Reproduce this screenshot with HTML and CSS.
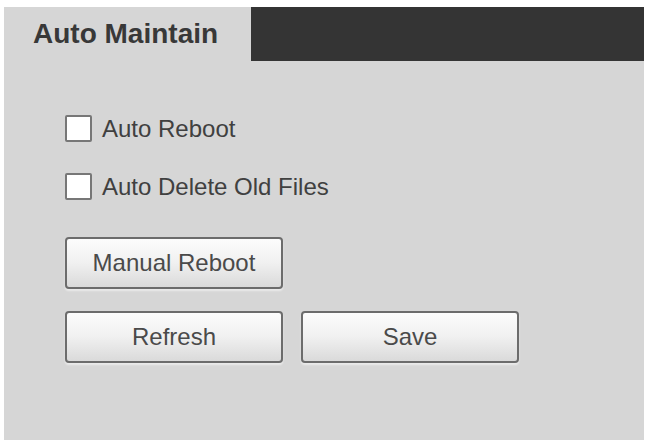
FILE: index.html
```html
<!DOCTYPE html>
<html>
<head>
    <meta charset="UTF-8">
    <title>Auto Maintain</title>
    <link rel="stylesheet" href="styles.css">
</head>
<body>
    <div class="panel">
        <div class="tabbar">
            <div class="tab">Auto Maintain</div>
            <div class="tab-rest"></div>
        </div>
        <div class="content">
            <label class="row"><span class="check"></span>Auto Reboot</label>
            <label class="row"><span class="check"></span>Auto Delete Old Files</label>
            <div class="btns first">
                <a href="javascript:;" class="btn">Manual Reboot</a>
            </div>
            <div class="btns">
                <a href="javascript:;" class="btn">Refresh</a>
                <a href="javascript:;" class="btn">Save</a>
            </div>
        </div>
    </div>
</body>
</html>
```

FILE: styles.css
```css
* {
    margin: 0;
    padding: 0;
    box-sizing: border-box;
}
body {
    background: #fff;
    font-family: "Liberation Sans", Arial, sans-serif;
    color: #3c3c3c;
}
.panel {
    margin: 7px 4px 0 4px;
    height: 433px;
    background-color: #d6d6d6;
}
.tabbar {
    display: flex;
    height: 54px;
}
.tab {
    width: 247px;
    padding-left: 29px;
    line-height: 54px;
    font-size: 28px;
    font-weight: bold;
    color: #383838;
}
.tab-rest {
    flex: 1;
    background-color: #343434;
}
.content {
    padding: 54px 0 0 61px;
    display: flex;
    flex-direction: column;
    align-items: flex-start;
}
.row {
    display: flex;
    align-items: center;
    height: 27px;
    font-size: 24px;
    line-height: 27px;
    margin-bottom: 31px;
    color: #404040;
}
.check {
    width: 27px;
    height: 27px;
    margin-right: 10px;
    background-color: #fff;
    border: 2px solid #777;
    border-radius: 2px;
}
.btns {
    display: flex;
    gap: 18px;
    margin-bottom: 22px;
}
.btns.first {
    margin-top: 6px;
}
.btn {
    display: block;
    width: 218px;
    height: 52px;
    line-height: 48px;
    text-align: center;
    font-size: 24px;
    color: #4a4a4a;
    text-decoration: none;
    border: 2px solid #6c6c6c;
    border-radius: 4px;
    background: linear-gradient(#fcfcfc, #f0f0f0 50%, #dadada);
    box-shadow: 0 2px 2px rgba(255, 255, 255, 0.5);
}
```
